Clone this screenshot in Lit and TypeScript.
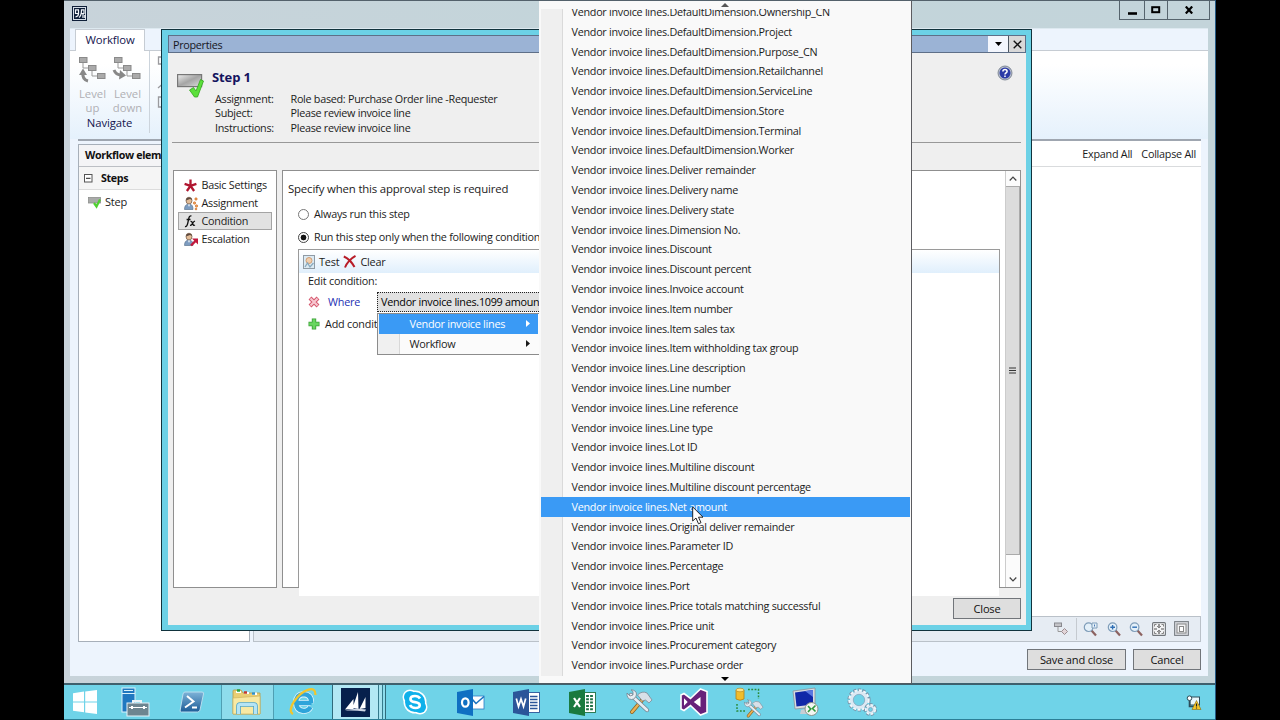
import { LitElement, html, css, svg, type TemplateResult } from 'lit';
import { customElement, property } from 'lit/decorators.js';
import { classMap } from 'lit/directives/class-map.js';

const PREFIX = 'Vendor invoice lines.';

const FIELDS = [
  'DefaultDimension.Ownership_CN',
  'DefaultDimension.Project',
  'DefaultDimension.Purpose_CN',
  'DefaultDimension.Retailchannel',
  'DefaultDimension.ServiceLine',
  'DefaultDimension.Store',
  'DefaultDimension.Terminal',
  'DefaultDimension.Worker',
  'Deliver remainder',
  'Delivery name',
  'Delivery state',
  'Dimension No.',
  'Discount',
  'Discount percent',
  'Invoice account',
  'Item number',
  'Item sales tax',
  'Item withholding tax group',
  'Line description',
  'Line number',
  'Line reference',
  'Line type',
  'Lot ID',
  'Multiline discount',
  'Multiline discount percentage',
  'Net amount',
  'Original deliver remainder',
  'Parameter ID',
  'Percentage',
  'Port',
  'Price totals matching successful',
  'Price unit',
  'Procurement category',
  'Purchase order',
];

interface Glyph {
  w: number;
  h: number;
  body: TemplateResult;
}

const person = svg`
  <ellipse cx="5" cy="3.6" rx="3" ry="3.4" fill="#e3bd98" stroke="#6d513d" stroke-width=".7"/>
  <path d="M2 3.4Q2.2.4 5 .4T8 3L6 2Z" fill="#5d4a40"/>
  <path d="M.5 12.5Q.5 7.4 4 7.4H6Q9 7.4 9 12.5Z" fill="#7d9cc0" stroke="#4f6885" stroke-width=".6"/>
  <path d="M4 7.4 5 10 6 7.4Z" fill="#fff"/>`;

const magnifier = (sign: TemplateResult) => svg`
  <path d="M8.5 8.5 13 13.5" stroke="#8c6260" stroke-width="2.2"/>
  <circle cx="5.6" cy="5.2" r="4.3" fill="#e4f0f9" stroke="#7f9db9" stroke-width="1.2"/>
  ${sign}`;

const tree = svg`
  <g fill="#aaa" stroke="#8a8a8a">
    <rect x=".5" y=".5" width="7.500" height="5"/>
    <rect x="9.500" y="8.500" width="7.500" height="5"/>
    <rect x="18.500" y="16.500" width="7.500" height="5"/>
  </g>
  <path d="M4 6V11H9M13 14V19H18" fill="none" stroke="#999"/>`;

const gear = (cx: number, cy: number, r: number, w: number) => svg`
  <circle cx=${cx} cy=${cy} r=${r + 1.2} fill="none" stroke="#7795ab" stroke-width=${w + 1.4} stroke-dasharray="2.8 1.4"/>
  <circle cx=${cx} cy=${cy} r=${r + 1} fill="none" stroke="#f2f7fb" stroke-width=${w} stroke-dasharray="2.8 1.4"/>
  <circle cx=${cx} cy=${cy} r=${r - 0.6} fill="none" stroke="#dce9f3" stroke-width=${w}/>
  <circle cx=${cx} cy=${cy} r=${r - w / 2 - 0.6} fill="none" stroke="#7f9fb8" stroke-width=".7"/>`;

const crossedTools = svg`
  <path d="M7 23 18 10" stroke="#8d6322" stroke-width="4" stroke-linecap="round"/>
  <path d="M7 23 18 10" stroke="#e9b155" stroke-width="2.4" stroke-linecap="round"/>
  <path d="M12.500 6Q17 1.500 22 4L27 11 24 14 20.500 11 17.500 12Z" fill="#d8e0e8" stroke="#7d8994" stroke-width=".8"/>
  <path d="M6 6 22 21" stroke="#75828e" stroke-width="4.200" stroke-linecap="round"/>
  <path d="M6 6 22 21" stroke="#e6edf3" stroke-width="2.700" stroke-linecap="round"/>
  <path d="M2 4 5 7 8 6 8 2.500 6 .8Q11 1 11.500 5 11 10 6.500 10.500 1.500 10 2 4Z" fill="#e6edf3" stroke="#75828e" stroke-width=".8"/>`;

const ICONS: Record<string, Glyph> = {
  app: {
    w: 15, h: 15,
    body: svg`<rect width="15" height="15" fill="#0e1f38"/><rect x="1.500" y="1.500" width="12" height="12" fill="none" stroke="#d5dde6"/>
      <path d="M7 3.800H3.500V7.500H6.500V4M6.500 7.500Q6.500 10.500 3.500 10.800M7 11.500Q9.500 10 9.500 3.800H12V7.500H9.500M11 7.500V12M12.800 9V12" fill="none" stroke="#f4f7fa" stroke-width="1.200"/>`,
  },
  levelUp: {
    w: 27, h: 26,
    body: svg`${tree}<path d="M9 24Q3 22.500 4 15" fill="none" stroke="#888" stroke-width="3"/><path d="M4 11.500 0 18H8Z" fill="#888"/>`,
  },
  levelDown: {
    w: 27, h: 26,
    body: svg`${tree}<path d="M0 13Q2 18 7 18" fill="none" stroke="#888" stroke-width="3"/><path d="M6 13 12 18.500 5 22.500Z" fill="#888"/>`,
  },
  step: {
    w: 26, h: 26,
    body: svg`<defs><linearGradient id="g" x1="0" x2="1" y2="1"><stop stop-color="#eee"/><stop offset=".5" stop-color="#a5a5a5"/><stop offset="1" stop-color="#ddd"/></linearGradient></defs>
      <rect x=".6" y="1.600" width="24" height="12" fill="url(#g)" stroke="#777" stroke-width="1.200"/>
      <path d="M12.500 17 16.500 14.500 19 18 23.500 6.500 26.500 8 20.500 24H17.500Z" fill="#5be03a" stroke="#34a51e" stroke-width=".8"/>`,
  },
  stepSmall: {
    w: 13, h: 12,
    body: svg`<rect x=".5" y="1.500" width="12" height="5.500" fill="#a9aaa9" stroke="#8d8f8d" stroke-width=".8"/>
      <path d="M6 7 8.500 10.500 12 3.500" fill="none" stroke="#4fd030" stroke-width="2.200"/>`,
  },
  collapse: {
    w: 9, h: 9,
    body: svg`<rect x=".5" y=".5" width="7.500" height="7.500" fill="#fff" stroke="#555"/><path d="M2 4.300H6.500" stroke="#222"/>`,
  },
  help: {
    w: 16, h: 16,
    body: svg`<circle cx="8" cy="8" r="7" fill="#b9c0cc" stroke="#6c7687" stroke-width=".8"/><circle cx="8" cy="8" r="5.500" fill="#2b3aa6"/>
      <path d="M5.900 6.600Q5.900 4.600 8 4.600T10.100 6.400Q10 7.400 8.900 8 8 8.500 8 9.500M8 10.500V12" fill="none" stroke="#fff" stroke-width="1.500"/>`,
  },
  star: {
    w: 13, h: 13,
    body: svg`<path d="M6.500 6.800V.5M6.500 6.800 .6 4.800M6.500 6.800 12.400 4.800M6.500 6.800 2.900 12M6.500 6.800 10.100 12" stroke="#b0152f" stroke-width="2.300"/>`,
  },
  assignment: {
    w: 14, h: 13,
    body: svg`${person}<g fill="#f2a15c" stroke="#c9671c" stroke-width=".6"><circle cx="12" cy="2" r="1.200"/><circle cx="10.500" cy="6" r="1.200"/><circle cx="12.500" cy="9" r="1.200"/><circle cx="12" cy="12" r=".9"/></g>`,
  },
  fx: {
    w: 12, h: 12,
    body: svg`<path d="M1 11.500Q3 12 3.800 8L4.900 3Q5.500.4 7.500 1M2.600 4.500H6.500M6.500 6.500Q8 6 8.600 8.500T11 10M11 6Q9.500 6.500 8.500 8.500T6 10.300" fill="none" stroke="#111" stroke-width="1.300"/>`,
  },
  escalation: {
    w: 14, h: 13,
    body: svg`${person}<path d="M7 12.500 11.500 8" stroke="#c2183c" stroke-width="2.400"/><path d="M8 5.500H14V11.500Z" fill="#c2183c"/>`,
  },
  test: {
    w: 12, h: 14,
    body: svg`<rect x=".5" y=".5" width="11" height="13" fill="#dceaf3" stroke="#8f9ba5"/><circle cx="6" cy="5.500" r="3" fill="#f0cfae" stroke="#c98f62" stroke-width=".8"/>
      <path d="M2 12 4.500 8 7 12 10.500 8" fill="none" stroke="#88a9bd" stroke-width="1.300"/>`,
  },
  clear: {
    w: 13, h: 13,
    body: svg`<path d="M.8 1.500Q7 4 11.500 12M12.500 .8Q5 5 2 12.500" fill="none" stroke="#b81c28" stroke-width="2"/>`,
  },
  remove: {
    w: 12, h: 12,
    body: svg`<path d="M2 2 10 10M10 2 2 10" stroke="#d5536a" stroke-width="4"/><path d="M2.500 2.500 9.500 9.500M9.500 2.500 2.500 9.500" stroke="#f7c6cf" stroke-width="2.200"/>`,
  },
  add: {
    w: 12, h: 12,
    body: svg`<path d="M6 .5V11.500M.5 6H11.500" stroke="#3a9e36" stroke-width="4.400"/><path d="M6 1.200V10.800M1.200 6H10.800" stroke="#69d660" stroke-width="2.800"/>`,
  },
  node: {
    w: 14, h: 13,
    body: svg`<rect x=".5" y="1" width="7" height="3.500" fill="#c4c4c8" stroke="#88898f"/><path d="M4 5V9.500H8" fill="none" stroke="#999"/>
      <path d="M10.500 6.500 13.500 9.500 10.500 12.500 7.500 9.500Z" fill="#e2d5d8" stroke="#9b8c91"/>`,
  },
  zoomFit: {
    w: 15, h: 14,
    body: svg`${magnifier(svg`<path d="M9 1H14V6H9Z" fill="#e4f0f9" stroke="#7f9db9"/><path d="M11.500 2.500V4.500" stroke="#4878b5"/>`)}`,
  },
  zoomIn: { w: 14, h: 14, body: svg`${magnifier(svg`<path d="M3.300 5.200H8M5.600 3V7.500" stroke="#2f6fb5" stroke-width="1.400"/>`)}` },
  zoomOut: { w: 14, h: 14, body: svg`${magnifier(svg`<path d="M3.300 5.200H8" stroke="#2f6fb5" stroke-width="1.400"/>`)}` },
  fit: {
    w: 14, h: 14,
    body: svg`<rect x=".6" y=".6" width="12.800" height="12.800" rx="1" fill="#f2f3f4" stroke="#70757a" stroke-width="1.100"/>
      <path d="M7 2V5M7 9V12M2 7H5M9 7H12" stroke="#555" stroke-width="1.200"/><path d="M2.500 4.500V2.500H4.500M9.500 2.500H11.500V4.500M11.500 9.500V11.500H9.500M4.500 11.500H2.500V9.500M5 4 7 6 9 4M5 10 7 8 9 10" fill="none" stroke="#666" stroke-width=".8"/>`,
  },
  actual: {
    w: 15, h: 15,
    body: svg`<rect x=".6" y=".6" width="13.800" height="13.800" fill="#d5d8dc" stroke="#777c82"/><rect x="3" y="3" width="9" height="9" fill="#f2f3f4" stroke="#888"/><rect x="5.500" y="5.500" width="4" height="5" fill="#fff" stroke="#888"/>`,
  },
  start: {
    w: 24, h: 24,
    body: svg`<path d="M0 3.200 11 1.600V11.400H0ZM12.200 1.400 24 0V11.400H12.200ZM0 12.600H11V22.300L0 20.700ZM12.200 12.600H24V24L12.200 22.500Z" fill="#fff"/>`,
  },
  server: {
    w: 30, h: 30,
    body: svg`<rect x="1" y="1" width="13" height="24" fill="#1f78c0" stroke="#d9f2fb"/><path d="M1 6.500H14M3 3.500H12" stroke="#d9f2fb"/>
      <path d="M12 16V14H20V16" fill="none" stroke="#eaf4f8" stroke-width="2"/><rect x="6" y="16" width="22" height="13" fill="#6d8590" stroke="#e6f2f7"/><path d="M8 20.500H26" stroke="#fff"/><path d="M11 19V22M23 19V22" stroke="#fff" stroke-width="2"/>`,
  },
  powershell: {
    w: 26, h: 22,
    body: svg`<defs><linearGradient id="p" y2="1" x2="0"><stop stop-color="#7eb3d8"/><stop offset="1" stop-color="#1c5c97"/></linearGradient></defs>
      <path d="M6 1H23Q25 1 24.500 3L21 19Q20.600 21 18.500 21H2.500Q.6 21 1.200 19L4 3Q4.400 1 6 1Z" fill="url(#p)" stroke="#b9ddee"/>
      <path d="M8 5 14.500 10.500 6 16.500M13 16.500H18" fill="none" stroke="#fff" stroke-width="2"/>`,
  },
  explorer: {
    w: 30, h: 28,
    body: svg`<path d="M1 26V3Q1 2 2 2H9L11 5H28V26Z" fill="#e9cf74" stroke="#b89a45" stroke-width=".8"/>
      <path d="M4 5V3H9V5M12 6V4H17V6M20 7V4.500H25V7" fill="#fff"/><path d="M5 2.500H8" stroke="#2aa543" stroke-width="2.500"/><path d="M12 4.500H15" stroke="#c33a2a" stroke-width="2.500"/><path d="M20 5.500H23" stroke="#2f8fc9" stroke-width="2.500"/>
      <path d="M1 10 28 8V26H1Z" fill="#f8e9a3" stroke="#cfb460" stroke-width=".7"/><path d="M6.500 26V18Q6.500 16.500 8 16.500H22Q23.500 16.500 23.500 18V26" fill="none" stroke="#4ea6cf" stroke-width="4.600"/><path d="M6.500 26V18Q6.500 16.500 8 16.500H22Q23.500 16.500 23.500 18V26" fill="none" stroke="#b5e4f5" stroke-width="3"/>`,
  },
  ie: {
    w: 28, h: 28,
    body: svg`<path d="M21.500 15H8.500M22 15Q22.500 6.500 14.500 6.200 7.300 6.500 7 14.500 7.500 22.500 14.500 23 19.500 23 21.500 19" fill="none" stroke="#e2f6fc" stroke-width="6"/>
      <path d="M22.500 15H8.500M22.300 15Q22.500 6.500 14.500 6.200 7.300 6.500 7 14.500 7.500 22.500 14.500 23 19.500 23 21.500 19" fill="none" stroke="#2ea4da" stroke-width="4.300"/>
      <path d="M4 26Q-1 23.500 5 13.500 11.500 4 19.500 1.600 26.500-.4 26.500 7" fill="none" stroke="#f0c52e" stroke-width="2.300"/>`,
  },
  dynamics: {
    w: 29, h: 29,
    body: svg`<rect width="29" height="29" fill="#06204c"/><path d="M4 21.500 12.500 11V21ZM11.500 20 17 4 17.500 21ZM18.500 21 24.500 9V20Z" fill="#fff"/><path d="M4 22.500Q14 19.500 25 21.500L24 23.500Q14 22 4 22.500Z" fill="#cfd8e6"/>`,
  },
  skype: {
    w: 26, h: 26,
    body: svg`<circle cx="8" cy="8" r="7.500" fill="#fff"/><circle cx="18" cy="18" r="7.500" fill="#fff"/><circle cx="13" cy="13" r="11.500" fill="#fff"/>
      <circle cx="8" cy="8" r="6" fill="#0fb0ea"/><circle cx="18" cy="18" r="6" fill="#0fb0ea"/><circle cx="13" cy="13" r="10" fill="#0fb0ea"/>
      <path d="M18 9.500Q16.500 7 13 7 8.500 7 8.500 10 8.500 12.500 13 13.200 18 14 17.700 16.500 17.500 19 13.500 19 9.500 19 8 16" fill="none" stroke="#fff" stroke-width="2.700"/>`,
  },
  outlook: {
    w: 28, h: 27,
    body: svg`<rect x="14" y="7" width="13" height="13" fill="#fff" stroke="#2b7cc6" stroke-width=".8"/><path d="M15 10 19 14.500 27 7.500" fill="none" stroke="#1a73c0" stroke-width="1.600"/>
      <path d="M0 3 16 0V27L0 24Z" fill="#0f6fc2"/><ellipse cx="8.300" cy="13.500" rx="3.300" ry="4.200" fill="none" stroke="#fff" stroke-width="2.200"/>`,
  },
  word: {
    w: 28, h: 27,
    body: svg`<rect x="14" y="3.500" width="12.500" height="20" fill="#fff" stroke="#2b5599" stroke-width=".9"/><path d="M17 7.500H24.500M17 10.500H24.500M17 13.500H24.500M17 16.500H24.500M17 19.500H24.500" stroke="#2b5599" stroke-width="1.300"/>
      <path d="M0 3 16 0V27L0 24Z" fill="#2b5599"/><path d="M3.300 9.500 5.500 17.500 8 10 10.500 17.500 12.700 9.500" fill="none" stroke="#fff" stroke-width="1.700"/>`,
  },
  excel: {
    w: 28, h: 27,
    body: svg`<rect x="14" y="3.500" width="12.500" height="20" fill="#fff" stroke="#1e7145" stroke-width=".9"/><path d="M18.500 6V22M22.500 6V22" stroke="#1e7145" stroke-width="2.800" stroke-dasharray="2 1.300"/>
      <path d="M0 3 16 0V27L0 24Z" fill="#1a7a3f"/><path d="M5 9 11 18M11 9 5 18" stroke="#fff" stroke-width="2.200"/>`,
  },
  tools: { w: 28, h: 26, body: svg`${crossedTools}` },
  vs: {
    w: 28, h: 28,
    body: svg`<path d="M20.500 1 27 3.500V24.500L20.500 27 10.500 17.500 4 22.500 1 21V7L4 5.500 10.500 10.500Z" fill="#68217a" stroke="#fff" stroke-width="1.600"/>
      <path d="M20.500 9V19L13.800 14ZM4 10.300V17.700L7.700 14Z" fill="#fff"/>`,
  },
  project: {
    w: 30, h: 30,
    body: svg`<path d="M1 3V12Q5 14.500 9 12V3Z" fill="#f0bd2d" stroke="#b57f13" stroke-width=".8"/><ellipse cx="5" cy="3" rx="4" ry="1.800" fill="#fce48c" stroke="#b57f13" stroke-width=".6"/>
      <path d="M13 2.500H23.500V12M2 17V24H11" fill="none" stroke="#2a8a3a" stroke-width="1.500" stroke-dasharray="1.800 1.500"/>
      <g transform="translate(8 12) scale(.74)">${crossedTools}</g>`,
  },
  rdp: {
    w: 30, h: 30,
    body: svg`<path d="M2 4 24 1V20L4 22Z" fill="#d9dde2" stroke="#8b939b" stroke-width=".8"/><path d="M4 5.500 22 3V17.500L5.500 19.500Z" fill="#1128a8"/><path d="M14 4 22 3V10Z" fill="#5a78e0"/>
      <path d="M10 23 18 21 20 27H9Z" fill="#c9ced4"/><circle cx="20.500" cy="22" r="6.500" fill="#f3f5f2" stroke="#8b938b"/><path d="M17 19 19.700 22 17 25M24.500 18.500 21.500 21.500 24.500 24.500" fill="none" stroke="#2f9a3c" stroke-width="1.600"/>`,
  },
  gears: { w: 30, h: 28, body: svg`${gear(12, 12, 8, 3.4)}${gear(23.5, 21.5, 3.6, 2)}` },
  tray: {
    w: 15, h: 15,
    body: svg`<rect x="4" y="2" width="9.500" height="8" fill="#e8f6fb" stroke="#2c4c59"/><path d="M3.500 5V11.500H8" fill="none" stroke="#2c4c59" stroke-width="1.600"/><circle cx="3.500" cy="3.200" r="2.300" fill="#fff" stroke="#2c4c59"/>
      <path d="M10.500 5.500 15 14.500H6Z" fill="#f6c625" stroke="#8b6b10" stroke-width=".6"/><path d="M10.500 8.500V11.500M10.500 12.400V13.400" stroke="#222" stroke-width="1.200"/>`,
  },
};

@customElement('ui-icon')
export class UiIcon extends LitElement {
  static styles = css`
    :host {
      display: inline-flex;
      flex: none;
    }
    svg {
      display: block;
      overflow: visible;
    }
  `;

  @property() name = '';

  render() {
    const icon = ICONS[this.name];
    if (!icon) return html``;
    return html`<svg width=${icon.w} height=${icon.h} viewBox="0 0 ${icon.w} ${icon.h}">${icon.body}</svg>`;
  }
}

const TASKS = [
  'server', 'powershell', 'explorer', 'ie', 'dynamics', 'skype', 'outlook',
  'word', 'excel', 'tools', 'vs', 'project', 'rdp', 'gears',
];

@customElement('app-root')
export class AppRoot extends LitElement {
  static styles = css`
    * {
      box-sizing: border-box;
    }
    :host {
      display: block;
      position: relative;
      width: 1280px;
      height: 720px;
      overflow: hidden;
      background: #000;
      color: #1b1b1b;
      font: 10.8px/14px 'Open Sans', 'Noto Sans', sans-serif;
      letter-spacing: -0.2px;
      white-space: nowrap;
      cursor: default;
    }
    .screen {
      display: flex;
      flex-direction: column;
      width: 1152px;
      height: 720px;
      margin-left: 64px;
      border-right: 1px solid #245a86;
    }

    /* main window */
    .window {
      height: 683px;
      padding: 0 7px 7px 6px;
      border-top: 1px solid #53616b;
      background: linear-gradient(90deg, #c8d3da, #c3d5da 50%, #c3d4da);
    }
    .titlebar {
      display: flex;
      justify-content: space-between;
      height: 27px;
      padding: 5px 0 0 2px;
    }
    .caption {
      display: flex;
      height: 19px;
      margin: -5px -2px 0 0;
      border: 1px solid #56646d;
      border-top: 0;
    }
    .caption span {
      display: flex;
      align-items: center;
      justify-content: center;
      width: 25px;
      border-right: 1px solid #56646d;
    }
    .caption span:nth-child(2) {
      width: 23px;
    }
    .caption span:last-child {
      width: 41px;
      border: 0;
    }
    .client {
      display: flex;
      flex-direction: column;
      height: 648px;
      background: #edf4fd;
      border-top: 1px solid #dde9f0;
    }
    .tabs {
      height: 22px;
      padding-left: 5px;
      border-bottom: 1px solid #c6ccd3;
    }
    .tab {
      width: 70px;
      height: 22px;
      border: 1px solid #c6ccd3;
      border-bottom: 0;
      background: #fff;
      color: #14144e;
      font-size: 11.3px;
      letter-spacing: -0.1px;
      line-height: 19px;
      text-align: center;
    }
    .ribbon {
      display: flex;
      height: 88px;
      padding-left: 5px;
      background: linear-gradient(#fff 15%, #e5f1fc);
    }
    .group {
      width: 75px;
      height: 82px;
      border-right: 1px solid #ccd4dc;
      text-align: center;
    }
    .group-buttons {
      display: flex;
      height: 64px;
      padding: 6px 0 0 0;
      color: #b0b0b4;
    }
    .ribbon-button {
      display: flex;
      flex-direction: column;
      align-items: center;
      width: 35px;
      font-size: 11.3px;
      letter-spacing: 0;
      line-height: 13.8px;
    }
    .ribbon-button ui-icon {
      margin-bottom: 4px;
    }
    .group-title {
      color: #14144e;
      font-size: 11.3px;
      letter-spacing: -0.1px;
      line-height: 16px;
      padding-right: 5px;
    }
    .panels {
      display: flex;
      gap: 3px;
      height: 503px;
      margin: 0 7px 0 8px;
      border-top: 2px solid #9fa6b0;
    }
    .elements {
      width: 172px;
      margin-top: 3px;
      border: 1px solid #a7afb9;
      background: #fff;
    }
    .elements h2,
    .elements h3 {
      margin: 0;
      font-size: 10.7px;
      letter-spacing: -0.35px;
      color: #111;
    }
    .elements h2 {
      height: 22px;
      padding-left: 6px;
      border-bottom: 1px solid #bcbfc4;
      background: #f4f4f6;
      line-height: 21px;
    }
    .elements h3 {
      display: flex;
      align-items: center;
      gap: 8px;
      height: 23px;
      padding: 0 0 0 5px;
      border-bottom: 1px solid #dcdcdc;
      background: #f5f5f5;
    }
    .element {
      display: flex;
      align-items: center;
      gap: 4px;
      height: 24px;
      padding-left: 9px;
      font-size: 11px;
    }
    .designer {
      display: flex;
      flex-direction: column;
      flex: 1;
      background: #fff;
    }
    .designer-head {
      display: flex;
      justify-content: flex-end;
      gap: 9px;
      height: 26px;
      padding-right: 5px;
      border-bottom: 1px solid #d9dbdd;
      line-height: 26px;
      font-size: 10.8px;
      letter-spacing: -0.25px;
    }
    .designer-canvas {
      flex: 1;
    }
    .designer-tools {
      display: flex;
      align-items: center;
      justify-content: flex-end;
      height: 26px;
      padding: 0 11px 1px 0;
      border: 1px solid #bac1c9;
      background: #e6ecf3;
    }
    .designer-tools ui-icon {
      margin-left: 8.500px;
    }
    .designer-tools i {
      width: 1px;
      height: 22px;
      margin: 0 -2px 0 8px;
      background: #c5cad0;
    }
    .footer {
      display: flex;
      justify-content: flex-end;
      gap: 7px;
      padding: 7px 7px 0 0;
    }
    .button {
      display: flex;
      align-items: center;
      justify-content: center;
      height: 21px;
      border: 1px solid #71757a;
      background: #dedede;
      color: #111;
      font-size: 11.1px;
    }
    .save {
      width: 99px;
    }
    .cancel {
      width: 68px;
    }

    /* taskbar */
    .taskbar {
      display: flex;
      height: 37px;
      border-top: 2px solid #3f606d;
      border-bottom: 1px solid #2c7f96;
      background: #6fd3e8;
    }
    .task {
      display: flex;
      align-items: center;
      justify-content: center;
      width: 55.9px;
    }
    .task.start {
      width: 43.8px;
      padding-right: 2px;
    }
    .task.open {
      width: 53.8px;
      margin: 0 1px;
      border: 1px solid #4f9fb3;
      border-width: 0 1px;
      background: #8edcec;
    }
    .task.active {
      justify-content: flex-start;
      padding-left: 7.600px;
      border-color: #2f6b7c;
      background: linear-gradient(90deg, #b2e8f4 45px, #357a8c 45px 46px, #a5e3f0 46px 49px, #357a8c 49px 50px, #8edcec 50px);
    }
    .tray {
      display: flex;
      align-items: center;
      margin-left: auto;
      padding-right: 14px;
    }

    /* properties dialog */
    .dialog {
      position: absolute;
      left: 161px;
      top: 29px;
      width: 871px;
      height: 602px;
      padding: 5px 5px 5px 6px;
      border: 1px solid #11333d;
      background: #6cd1e6;
    }
    .dialog-inner {
      height: 590px;
      background: #efefef;
    }
    .dialog-title {
      display: flex;
      height: 18px;
      border: 1px solid #5e6f88;
      background: #9bb3d5;
      line-height: 17px;
      padding-left: 4px;
      color: #16161e;
      letter-spacing: -0.3px;
    }
    .dialog-title span {
      display: flex;
      align-items: center;
      justify-content: center;
      width: 20px;
      margin-left: auto;
      background: #f3f6fd;
    }
    .dialog-title b {
      display: flex;
      align-items: center;
      justify-content: center;
      width: 17px;
      border-left: 1px solid #4c5560;
      background: #d8d8d8;
    }
    .dialog-head {
      display: flex;
      height: 90px;
      margin: 0 5px 0 4px;
      padding-top: 20px;
      border-bottom: 1px solid #989898;
    }
    .dialog-head > ui-icon {
      margin-left: 5px;
    }
    .dialog-head > ui-icon:last-child {
      margin: -8px 8px 0 auto;
    }
    .summary {
      display: grid;
      grid-template-columns: 75.5px auto;
      grid-template-rows: 17px repeat(3, 14.4px);
      align-content: start;
      margin: -3px 0 0 12px;
      letter-spacing: -0.28px;
    }
    .summary h1 {
      grid-column: 1 / 3;
      margin: 0 0 0 -3px;
      color: #14145e;
      font-size: 13px;
      letter-spacing: -0.1px;
      line-height: 15px;
    }
    .summary span {
      padding-top: 5px;
    }
    .dialog-body {
      display: flex;
      gap: 5px;
      height: 418px;
      margin: 27px 5px 0;
    }
    .nav {
      width: 104px;
      padding: 5px 4px;
      border: 1px solid #8f8f8f;
      background: #fff;
    }
    .nav-item {
      display: flex;
      align-items: center;
      gap: 3.500px;
      height: 18px;
      padding-left: 5px;
      border: 1px solid transparent;
      letter-spacing: -0.25px;
    }
    .nav-item.selected {
      border-color: #a4a4a4;
      background: #e2e2e2;
    }
    .nav-item ui-icon {
      width: 14px;
    }
    .pane {
      display: flex;
      flex: 1;
      border: 1px solid #8f8f8f;
      background: #fff;
    }
    .pane-content {
      flex: 1;
    }
    .pane-content p {
      margin: 0;
      padding: 11px 0 0 5px;
      height: 32px;
      font-size: 11.4px;
      letter-spacing: -0.17px;
    }
    .radio {
      display: flex;
      align-items: center;
      gap: 5px;
      height: 23px;
      padding: 0 0 1px 15px;
      letter-spacing: -0.25px;
    }
    .radio i {
      width: 11px;
      height: 11px;
      border: 1px solid #777;
      border-radius: 50%;
      background: #fff;
    }
    .radio.on i {
      border-color: #444;
      background: radial-gradient(#111 0 2.6px, #fff 3.2px);
    }
    .condition {
      width: 702px;
      height: 338px;
      margin-left: 15px;
      border: 1px solid #9a9a9a;
      border-bottom: 0;
    }
    .condition-fill {
      height: 346px;
      background: #fff;
    }
    .condition-tools {
      display: flex;
      align-items: center;
      gap: 4px;
      height: 23px;
      padding-left: 4px;
      background: linear-gradient(#fff, #e0effc);
      font-size: 10.9px;
      letter-spacing: -0.2px;
    }
    .condition-title {
      height: 18px;
      padding-left: 9px;
      line-height: 16px;
    }
    .clause {
      display: flex;
      align-items: center;
      height: 22px;
      padding-left: 9px;
    }
    .clause ui-icon {
      width: 20px;
    }
    .clause.add ui-icon {
      width: 17px;
    }
    .clause em {
      width: 49px;
      color: #2430b4;
      font-style: normal;
      font-size: 10.8px;
    }
    .field {
      width: 180px;
      height: 20px;
      border: 1px dotted #222;
      background: #e1e1e1;
      padding-left: 3px;
      line-height: 18px;
      letter-spacing: -0.27px;
      color: #000;
    }
    .scrollbar {
      display: flex;
      flex-direction: column;
      width: 15px;
      border-left: 1px solid #ccc;
      background: #fbfbfb;
    }
    .scrollbar span {
      display: flex;
      align-items: center;
      justify-content: center;
      height: 15px;
    }
    .thumb {
      display: flex;
      align-items: center;
      justify-content: center;
      height: 369px;
      margin-bottom: 17px;
      border: 1px solid #aaa;
      border-left: 0;
      background: #dcdcdc;
    }
    .dialog-foot {
      display: flex;
      justify-content: flex-end;
      padding: 10px 5px 0 0;
    }
    .dialog-foot .button {
      width: 68px;
    }

    /* menus */
    .menu {
      position: absolute;
      left: 377px;
      top: 313px;
      width: 163px;
      height: 42px;
      padding: 0 1px;
      border: 1px solid #8c8c8c;
      background: linear-gradient(90deg, #f0f0f0 21px, #d8d8d8 21px 22px, #fbfbfb 22px);
    }
    .menu-item {
      display: flex;
      align-items: center;
      justify-content: space-between;
      height: 19.8px;
      padding: 0 8px 0 30.500px;
      font-size: 10.9px;
      letter-spacing: -0.3px;
    }
    .menu-item.hot {
      background: #3a9af5;
      color: #fff;
    }
    .submenu {
      position: absolute;
      left: 539px;
      top: 1px;
      width: 373px;
      height: 683px;
      padding: 8px 1px 0 2px;
      border-right: 1px solid #5c5c60;
      border-bottom: 1px solid #4f5a60;
      background: #f9f9f9;
      letter-spacing: -0.27px;
    }
    .submenu-list {
      display: flex;
      flex-direction: column;
      height: 667px;
      overflow: hidden;
      background: linear-gradient(90deg, #efefef 21px, #dadada 21px 22px, transparent 22px);
    }
    .submenu-item {
      flex: none;
      height: 19.81px;
      padding-left: 30.5px;
      line-height: 19.81px;
    }
    .submenu-item:first-child {
      margin-top: -7.1px;
    }
    .submenu-item.hot {
      background: #3a9af5;
      color: #fff;
    }
    .scroll-up,
    .scroll-down {
      position: absolute;
      left: 182px;
      top: 2px;
    }
    .scroll-down {
      top: 676px;
    }
    .pointer {
      position: absolute;
      left: 692px;
      top: 506px;
    }
    svg {
      display: block;
    }
  `;

  private renderWindow() {
    return html`
      <div class="window">
        <div class="titlebar">
          <ui-icon name="app"></ui-icon>
          <div class="caption">
            <span><svg width="9" height="9"><path d="M0 7.500H9" stroke="#000" stroke-width="2.600"/></svg></span>
            <span><svg width="10" height="8"><rect x="1.200" y="1.200" width="7" height="5" fill="none" stroke="#000" stroke-width="2"/></svg></span>
            <span><svg width="8" height="8"><path d="M.8 .5 7.200 7.500M7.200 .5 .8 7.500" stroke="#000" stroke-width="2.200"/></svg></span>
          </div>
        </div>
        <div class="client">
          <div class="tabs"><div class="tab">Workflow</div></div>
          <div class="ribbon">
            <div class="group">
              <div class="group-buttons">
                <div class="ribbon-button"><ui-icon name="levelUp"></ui-icon>Level<br />up</div>
                <div class="ribbon-button"><ui-icon name="levelDown"></ui-icon>Level<br />down</div>
              </div>
              <div class="group-title">Navigate</div>
            </div>
            <svg width="16" height="80"><path d="M16 6H8.500V13H16M8 37 16 30M16 46H8.500V56H16" fill="none" stroke="#9a9a9e" stroke-width="1.300"/></svg>
          </div>
          <div class="panels">
            <div class="elements">
              <h2>Workflow elements</h2>
              <h3><ui-icon name="collapse"></ui-icon>Steps</h3>
              <div class="element"><ui-icon name="stepSmall"></ui-icon>Step</div>
            </div>
            <div class="designer">
              <div class="designer-head"><span>Expand All</span><span>Collapse All</span></div>
              <div class="designer-canvas"></div>
              <div class="designer-tools">
                <ui-icon name="node"></ui-icon><i></i>
                <ui-icon name="zoomFit"></ui-icon>
                <ui-icon name="zoomIn"></ui-icon>
                <ui-icon name="zoomOut"></ui-icon>
                <ui-icon name="fit"></ui-icon>
                <ui-icon name="actual"></ui-icon>
              </div>
            </div>
          </div>
          <div class="footer">
            <div class="button save">Save and close</div>
            <div class="button cancel">Cancel</div>
          </div>
        </div>
      </div>
    `;
  }

  private renderNavItem(icon: string, label: string, selected = false) {
    return html`<div class=${classMap({ 'nav-item': true, selected })}><ui-icon name=${icon}></ui-icon>${label}</div>`;
  }

  private renderDialog() {
    return html`
      <div class="dialog">
        <div class="dialog-inner">
          <div class="dialog-title">
            Properties
            <span><svg width="7" height="4"><path d="M0 0H7L3.500 4Z"/></svg></span>
            <b><svg width="9" height="9"><path d="M.7 .7 8.300 8.300M8.300 .7 .7 8.300" stroke="#111" stroke-width="1.300"/></svg></b>
          </div>
          <div class="dialog-head">
            <ui-icon name="step"></ui-icon>
            <div class="summary">
              <h1>Step 1</h1>
              <span>Assignment:</span><span>Role based: Purchase Order line -Requester</span>
              <span>Subject:</span><span>Please review invoice line</span>
              <span>Instructions:</span><span>Please review invoice line</span>
            </div>
            <ui-icon name="help"></ui-icon>
          </div>
          <div class="dialog-body">
            <div class="nav">
              ${this.renderNavItem('star', 'Basic Settings')}
              ${this.renderNavItem('assignment', 'Assignment')}
              ${this.renderNavItem('fx', 'Condition', true)}
              ${this.renderNavItem('escalation', 'Escalation')}
            </div>
            <div class="pane">
              <div class="pane-content">
                <p>Specify when this approval step is required</p>
                <div class="radio"><i></i>Always run this step</div>
                <div class="radio on"><i></i>Run this step only when the following condition is met</div>
                <div class="condition">
                  <div class="condition-fill">
                    <div class="condition-tools">
                      <ui-icon name="test"></ui-icon>Test <ui-icon name="clear"></ui-icon>Clear
                    </div>
                    <div class="condition-title">Edit condition:</div>
                    <div class="clause">
                      <ui-icon name="remove"></ui-icon><em>Where</em>
                      <div class="field">Vendor invoice lines.1099 amount</div>
                    </div>
                    <div class="clause add"><ui-icon name="add"></ui-icon>Add condition</div>
                  </div>
                </div>
              </div>
              <div class="scrollbar">
                <span><svg width="8" height="5"><path d="M.7 4.500 4 1 7.300 4.500" fill="none" stroke="#444" stroke-width="1.200"/></svg></span>
                <div class="thumb"><svg width="7" height="8"><path d="M0 1H7M0 3.500H7M0 6H7" stroke="#333"/></svg></div>
                <span><svg width="8" height="5"><path d="M.7 .5 4 4 7.300 .5" fill="none" stroke="#444" stroke-width="1.200"/></svg></span>
              </div>
            </div>
          </div>
          <div class="dialog-foot"><div class="button">Close</div></div>
        </div>
      </div>
    `;
  }

  private renderMenus() {
    const arrow = html`<svg width="4" height="7"><path d="M0 0 4 3.500 0 7Z" fill="currentColor"/></svg>`;
    return html`
      <div class="menu">
        <div class="menu-item hot">Vendor invoice lines ${arrow}</div>
        <div class="menu-item">Workflow ${arrow}</div>
      </div>
      <div class="submenu">
        <svg class="scroll-up" width="8" height="4"><path d="M0 4H8L4 0Z" fill="#555"/></svg>
        <div class="submenu-list">
          ${FIELDS.map(
            (field) => html`<div class=${classMap({ 'submenu-item': true, hot: field === 'Net amount' })}>${PREFIX}${field}</div>`,
          )}
        </div>
        <svg class="scroll-down" width="8" height="4"><path d="M0 0H8L4 4Z"/></svg>
      </div>
    `;
  }

  render() {
    return html`
      <div class="screen">
        ${this.renderWindow()}
        <div class="taskbar">
          <div class="task start"><ui-icon name="start"></ui-icon></div>
          ${TASKS.map(
            (task) => html`
              <div class=${classMap({ task: true, open: task === 'explorer' || task === 'dynamics', active: task === 'dynamics' })}>
                <ui-icon name=${task}></ui-icon>
              </div>
            `,
          )}
          <div class="tray"><ui-icon name="tray"></ui-icon></div>
        </div>
      </div>
      ${this.renderDialog()} ${this.renderMenus()}
      <svg class="pointer" width="12" height="19">
        <path d="M.7 .9V15L4 12 6.500 17.800 9 16.700 6.500 11.200H11Z" fill="#fff" stroke="#111" stroke-width=".9"/>
      </svg>
    `;
  }
}
